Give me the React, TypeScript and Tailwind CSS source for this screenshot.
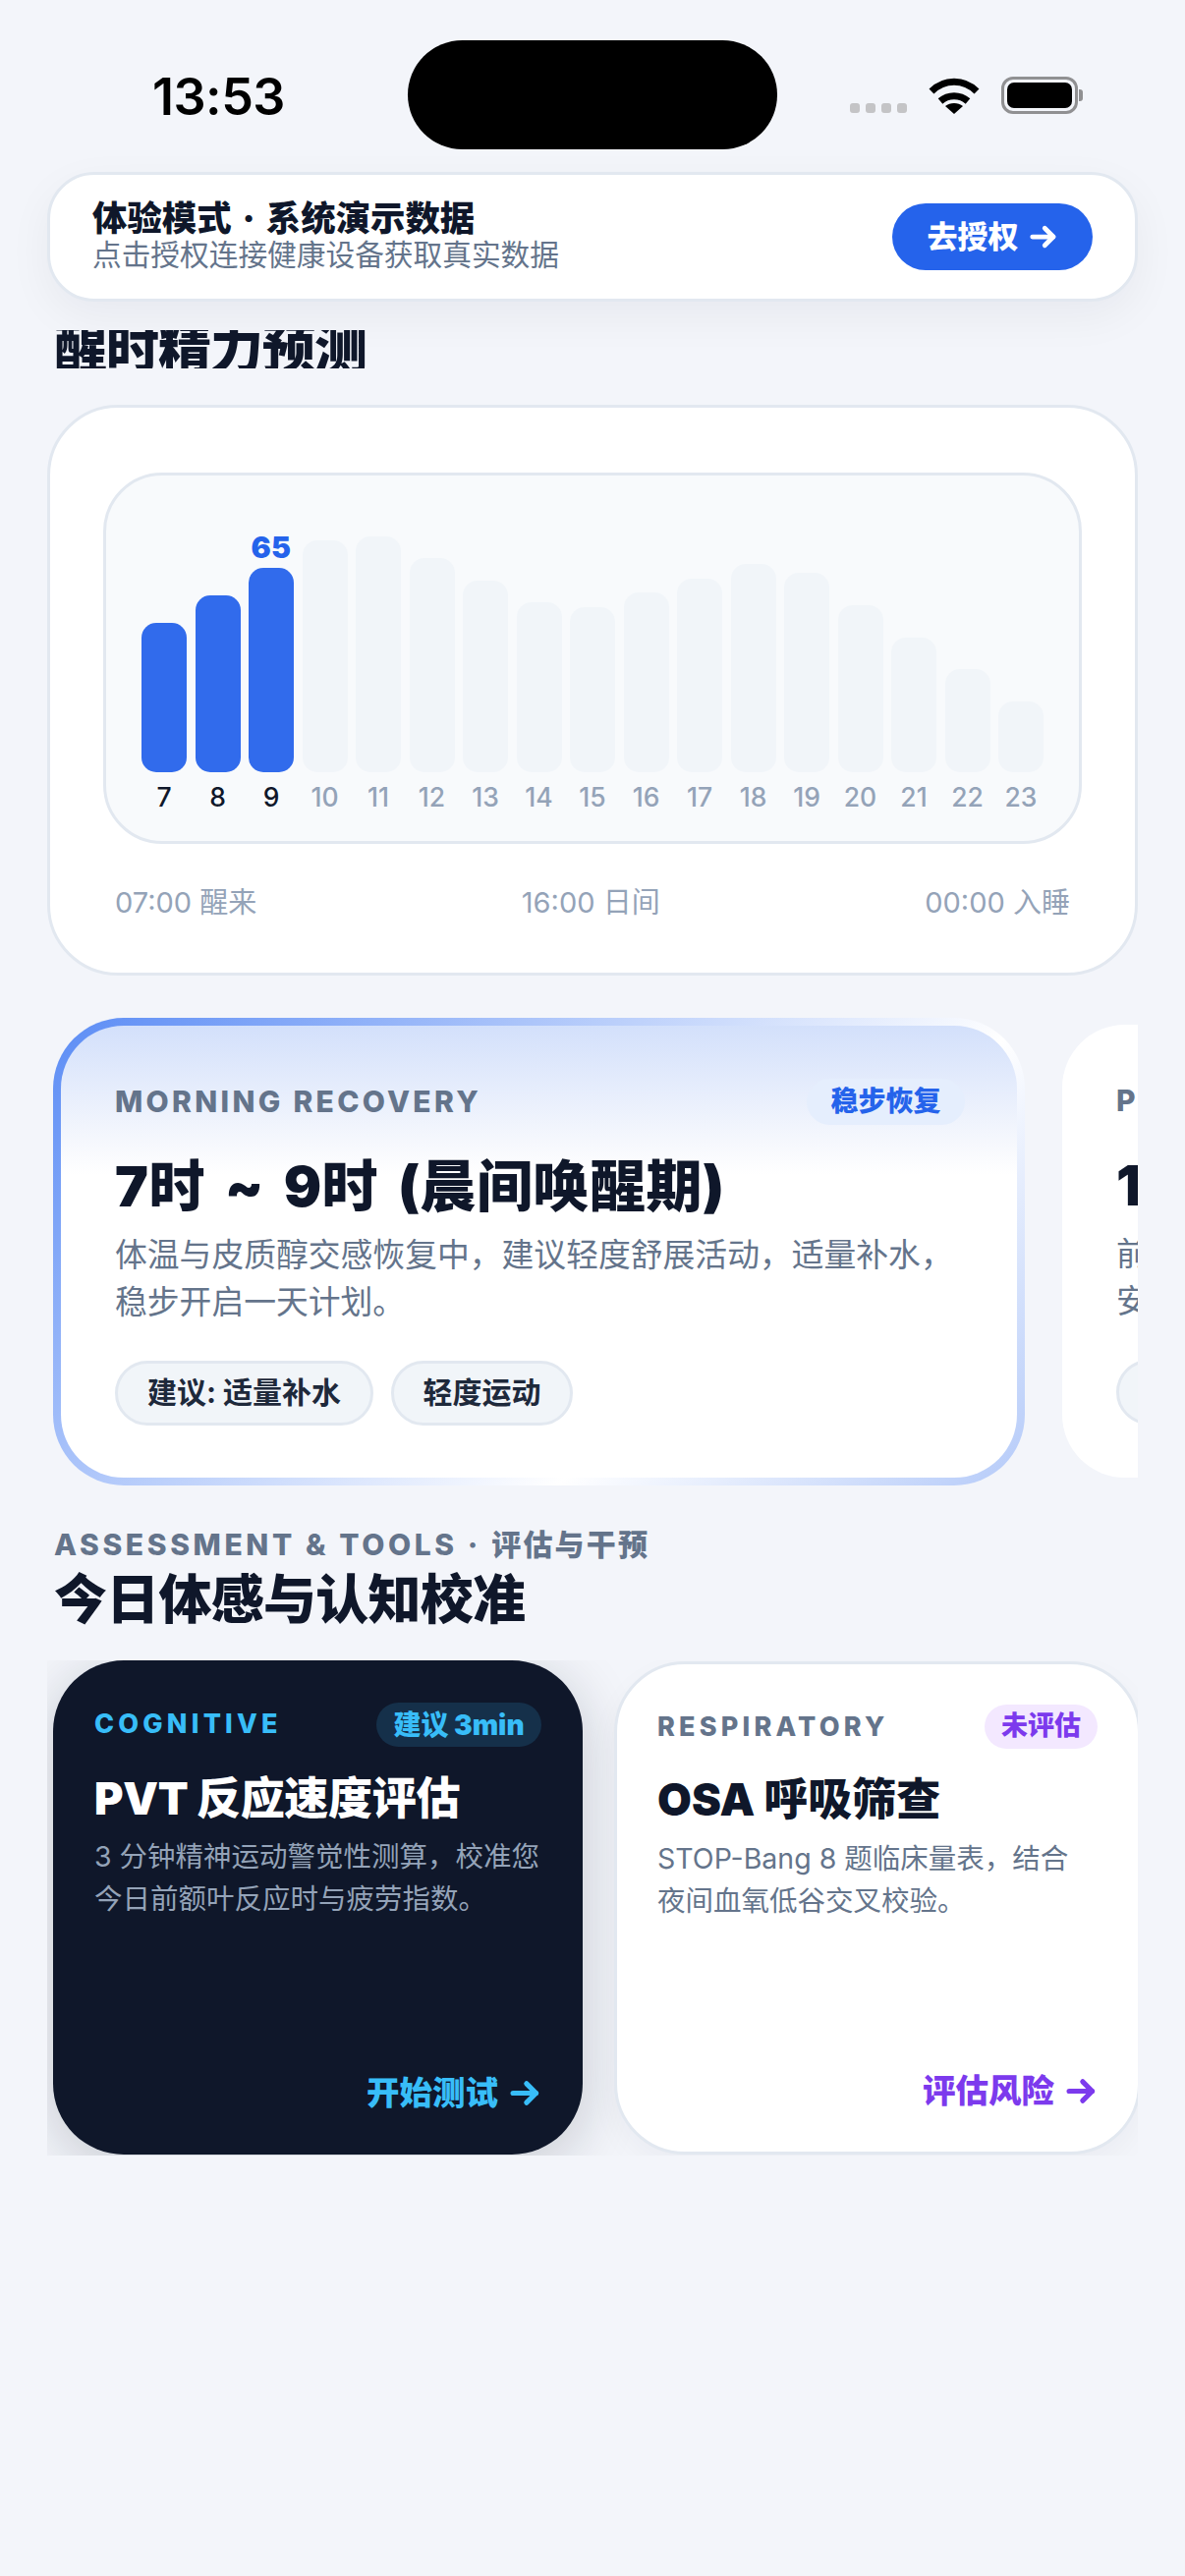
const heights = [152, 180, 208, 236, 240, 218, 195, 173, 168, 183, 197, 212, 203, 170, 137, 105, 72];

function Wifi() {
  return (
    <svg width="52" height="38" viewBox="0 0 52 38" fill="none" stroke="#000" strokeWidth="7">
      <path d="M3 15 C16 2 36 2 49 15" />
      <path d="M12 25 C20 18 32 18 40 25" />
      <path d="M26 38 L17 30 C22 26 30 26 35 30 Z" fill="#000" stroke="none" />
    </svg>
  );
}

function Arrow({ size = 28 }: { size?: number }) {
  return (
    <svg width={size} height={size} viewBox="0 0 24 24" fill="none" stroke="currentColor" strokeWidth="3.8" strokeLinecap="round" strokeLinejoin="round">
      <path d="M3 12 H20" />
      <path d="M13 5 L20 12 L13 19" />
    </svg>
  );
}

function StatusBar() {
  return (
    <div className="h-[175px] shrink-0 flex items-start pt-[41px] pl-[155px]">
      <div className="w-[260px] pt-[32px] text-[52px] leading-[52px] font-semibold text-black tracking-[-0.5px]">13:53</div>
      <div className="w-[376px] h-[111px] rounded-[56px] bg-black shrink-0" />
      <div className="flex items-end pt-[37px] pl-[74px] h-[75px]">
        <div className="flex gap-[6px] mb-[1px]">
          {[0, 1, 2, 3].map((i) => (
            <div key={i} className="w-[10px] h-[10px] rounded-[3px] bg-[#c4c4c6]" />
          ))}
        </div>
        <div className="ml-[22px]"><Wifi /></div>
        <div className="ml-[22px] flex items-center">
          <div className="w-[78px] h-[38px] rounded-[12px] border-[3px] border-[#909092] p-[3px]">
            <div className="w-full h-full rounded-[7px] bg-black" />
          </div>
          <div className="w-[4px] h-[12px] rounded-r-[3px] bg-[#909092] ml-[1px]" />
        </div>
      </div>
    </div>
  );
}

function Banner() {
  return (
    <div className="mx-[48px] h-[132px] shrink-0 rounded-[48px] bg-white border-[3px] border-[#e2e8f0] shadow-[0_15px_45px_rgba(15,23,42,0.05)] flex items-center justify-between pl-[43px] pr-[43px]">
      <div className="flex flex-col">
        <div className="text-[35.4px] leading-[36px] font-black text-[#0f172a] [word-spacing:4px]">体验模式 · 系统演示数据</div>
        <div className="text-[29.7px] leading-[36px] text-[#64748b]">点击授权连接健康设备获取真实数据</div>
      </div>
      <div className="w-[204px] h-[68px] rounded-full bg-[#2563eb] text-white text-[31px] font-black flex items-center justify-center gap-[10px]">
        去授权<Arrow size={30} />
      </div>
    </div>
  );
}

function Chart() {
  return (
    <div className="mx-[48px] h-[581px] shrink-0 rounded-[72px] bg-white border-[3px] border-[#e2e8f0] pt-[66px] px-[54px]">
      <div className="h-[378px] rounded-[60px] bg-[#f8fafc] border-[3px] border-[#e2e8f0] px-[36px] pt-[62px]">
        <div className="h-[240px] flex items-end gap-[8.5px]">
          {heights.map((h, i) => (
            <div key={i} className="relative w-[46px] shrink-0">
              {i === 2 && (
                <div className="absolute left-0 right-0 -top-[39px] text-center text-[30px] leading-[36px] font-black text-[#2563eb] tracking-[0.5px]">65</div>
              )}
              <div
                className={i < 3 ? "rounded-[15px] bg-[#316bec]" : "rounded-[15px] bg-[#f1f5f9]"}
                style={{ height: h }}
              />
            </div>
          ))}
        </div>
        <div className="mt-[9px] flex gap-[8.5px]">
          {heights.map((_, i) => (
            <div key={i} className={i < 3 ? "w-[46px] shrink-0 text-center text-[26.5px] leading-[32px] font-medium text-[#0f172a]" : "w-[46px] shrink-0 text-center text-[26.5px] leading-[32px] font-medium text-[#94a3b8]"}>
              {i + 7}
            </div>
          ))}
        </div>
      </div>
      <div className="mt-[42px] px-[12px] flex justify-between text-[29px] leading-[36px] text-[#94a3b8]">
        <span>07:00 醒来</span>
        <span>16:00 日间</span>
        <span>00:00 入睡</span>
      </div>
    </div>
  );
}

function Recovery() {
  return (
    <div className="ml-[54px] w-[1104px] h-[477px] shrink-0 overflow-hidden flex items-center gap-[38px]">
      <div className="w-[989px] h-[476px] shrink-0 rounded-[72px] p-[8px] bg-[linear-gradient(135deg,#5b8cf5_0%,#ffffff_67.5%,#b4caf9_100%)]">
        <div className="h-full rounded-[64px] bg-[linear-gradient(180deg,#d3e0fb_0%,#f6f8fd_26%,#ffffff_33%)] px-[55px] pt-[54px]">
          <div className="flex items-center justify-between h-[47px]">
            <div className="text-[30px] font-extrabold text-[#64748b] tracking-[3.3px]">MORNING RECOVERY</div>
            <div className="w-[161px] mr-[-2px] h-[47px] rounded-full bg-[#e5eefd] text-[#2563eb] text-[28px] font-black flex items-center justify-center">稳步恢复</div>
          </div>
          <div className="mt-[27px] text-[57px] leading-[72px] font-black text-[#0f172a] tracking-[0.5px] [word-spacing:8px]">7时 ~ 9时 (晨间唤醒期)</div>
          <div className="mt-[9px] text-[32.8px] leading-[48px] text-[#64748b]">
            体温与皮质醇交感恢复中，建议轻度舒展活动，适量补水，<br />稳步开启一天计划。
          </div>
          <div className="mt-[36px] flex gap-[18px]">
            <div className="w-[263px] h-[66px] rounded-[36px] bg-[#f1f5f9] border-[3px] border-[#e2e8f0] text-[30px] font-bold text-[#1e293b] flex items-center justify-center">建议: 适量补水</div>
            <div className="w-[185px] h-[66px] rounded-[36px] bg-[#f1f5f9] border-[3px] border-[#e2e8f0] text-[30px] font-bold text-[#1e293b] flex items-center justify-center">轻度运动</div>
          </div>
        </div>
      </div>
      <div className="w-[988px] h-[461px] shrink-0 rounded-[64px] bg-white px-[55px] pt-[54px]">
        <div className="h-[47px] flex items-center text-[30px] font-extrabold text-[#64748b] tracking-[3.3px]">PEAK</div>
        <div className="mt-[27px] text-[57px] leading-[72px] font-black text-[#0f172a]">10时</div>
        <div className="mt-[9px] text-[32.8px] leading-[48px] text-[#64748b]">前额叶<br />安排</div>
        <div className="mt-[36px] w-[263px] h-[66px] rounded-[36px] bg-[#f1f5f9] border-[3px] border-[#e2e8f0]" />
      </div>
    </div>
  );
}

function Tools() {
  return (
    <div className="ml-[48px] w-[1110px] h-[504px] shrink-0 overflow-hidden flex gap-[32px] pl-[6px]">
      <div className="w-[539px] h-[503px] shrink-0 rounded-[72px] bg-[#0f172a] shadow-[0_12px_60px_rgba(15,23,42,0.2)] px-[42px] pt-[43px] flex flex-col">
        <div className="flex items-center justify-between h-[45px]">
          <div className="text-[27px] font-extrabold text-[#38bdf8] tracking-[4.2px]">COGNITIVE</div>
          <div className="h-[45px] w-[168px] rounded-full bg-[#15304a] text-[#38bdf8] text-[28px] font-black flex items-center justify-center">建议 3min</div>
        </div>
        <div className="mt-[26px] text-[45px] leading-[54px] font-black text-white tracking-[-0.3px]">PVT 反应速度评估</div>
        <div className="mt-[10px] text-[28.5px] leading-[43px] text-[#94a3b8]">3 分钟精神运动警觉性测算，校准您<br />今日前额叶反应时与疲劳指数。</div>
        <div className="mt-auto mb-[42px] flex items-center justify-end gap-[11px] text-[33.5px] leading-[42px] font-black text-[#38bdf8]">开始测试<Arrow size={33} /></div>
      </div>
      <div className="w-[536px] h-[502px] mt-[1px] shrink-0 rounded-[72px] bg-white border-[3px] border-[#e2e8f0] shadow-[0_12px_30px_rgba(15,23,42,0.04)] px-[41px] pt-[41px] flex flex-col">
        <div className="flex items-center justify-between h-[45px]">
          <div className="mt-[2px] text-[27px] font-extrabold text-[#64748b] tracking-[4.2px]">RESPIRATORY</div>
          <div className="h-[45px] w-[115px] rounded-full bg-[#f3e8ff] text-[#7c3aed] text-[27px] font-black flex items-center justify-center">未评估</div>
        </div>
        <div className="mt-[25px] text-[45px] leading-[54px] font-black text-[#0f172a]">OSA 呼吸筛查</div>
        <div className="mt-[11px] text-[28.5px] leading-[43px] text-[#64748b]">STOP-Bang 8 题临床量表，结合<br />夜间血氧低谷交叉校验。</div>
        <div className="mt-auto mb-[41px] flex items-center justify-end gap-[11px] text-[33.5px] leading-[42px] font-black text-[#7c3aed]">评估风险<Arrow size={33} /></div>
      </div>
    </div>
  );
}

export default function App() {
  return (
    <div className="w-[1206px] h-[2622px] overflow-hidden bg-[#f3f5fa] flex flex-col" style={{ fontFamily: 'Inter, "Noto Sans CJK SC", sans-serif' }}>
      <StatusBar />
      <Banner />
      <div className="h-[76px] shrink-0 ml-[55px] pt-[29px]">
        <div className="h-[39px] overflow-hidden text-[54px] leading-[39px] font-black text-[#0f172a] tracking-[-1px]">醒时精力预测</div>
      </div>
      <div className="h-[29px] shrink-0" />
      <Chart />
      <div className="h-[42px] shrink-0" />
      <Recovery />
      <div className="ml-[55px] mt-[42px] text-[30px] leading-[36px] font-extrabold text-[#64748b] tracking-[3.6px]">ASSESSMENT &amp; TOOLS · <span className="tracking-[2.2px]">评估与干预</span></div>
      <div className="ml-[55px] mt-[9px] text-[54px] leading-[60px] font-black text-[#0f172a] tracking-[-0.75px]">今日体感与认知校准</div>
      <div className="h-[31px] shrink-0" />
      <Tools />
    </div>
  );
}
